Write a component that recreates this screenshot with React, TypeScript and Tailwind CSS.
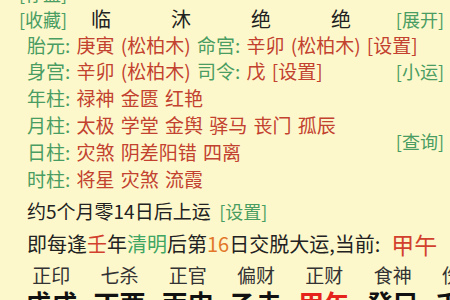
import React from "react";

const G = "text-[#4a9d62]";
const R = "text-[#c2412f]";

function Row({ h, children, className = "" }: { h: string; children: React.ReactNode; className?: string }) {
  return <div className={`flex items-center whitespace-nowrap ${h} ${className}`}>{children}</div>;
}

export default function App() {
  const labels = ["正印", "七杀", "正官", "偏财", "正财", "食神", "伤官"];
  const pillars = ["戊戌", "丁酉", "丙申", "乙未", "甲午", "癸巳", "壬辰"];
  return (
    <div
      className="w-[450px] h-[300px] overflow-hidden bg-[#fdf8cb] text-[19px] text-[#222]"
      style={{ fontFamily: '"Noto Sans CJK SC", "Noto Sans", sans-serif' }}
    >
      <div className="mt-[-20px]">
        <Row h="h-[26px]" className="pl-[19px]">
          <span className={`${G} text-[18px]`}>[存盘]</span>
        </Row>
        <Row h="h-[26px]" className="pl-[19px] pr-[6px]">
          <span className={`${G} text-[18px] w-[42px]`}>[收藏]</span>
          {["临", "沐", "绝", "绝"].map((c, i) => (
            <span key={i} className="w-[80px] text-center text-[20px]">
              {c}
            </span>
          ))}
          <span className={`${G} text-[18px] ml-auto`}>[展开]</span>
        </Row>
        <Row h="h-[26px]" className="pl-[27px] [word-spacing:2px]">
          <span className={G}>胎元: </span>
          <span className={R}>&nbsp;庚寅 (松柏木)&nbsp;</span>
          <span className={G}>命宫: </span>
          <span className={R}>&nbsp;辛卯 (松柏木) [设置]</span>
        </Row>
        <Row h="h-[26px]" className="pl-[27px] pr-[6px] [word-spacing:2px]">
          <span className={G}>身宫: </span>
          <span className={R}>&nbsp;辛卯 (松柏木)&nbsp;</span>
          <span className={G}>司令: </span>
          <span className={R}>&nbsp;戊 [设置]</span>
          <span className={`${G} text-[18px] ml-auto [word-spacing:0px]`}>[小运]</span>
        </Row>
        <div className="flex pr-[6px]">
          <div className="flex-1 pl-[27px] [word-spacing:2px]">
            <Row h="h-[27px]" className="mt-[1px]">
              <span className={G}>年柱: </span>
              <span className={R}>&nbsp;禄神 金匮 红艳</span>
            </Row>
            <Row h="h-[27px]">
              <span className={G}>月柱: </span>
              <span className={R}>&nbsp;太极 学堂 金舆 驿马 丧门 孤辰</span>
            </Row>
            <Row h="h-[27px]">
              <span className={G}>日柱: </span>
              <span className={R}>&nbsp;灾煞 阴差阳错 四离</span>
            </Row>
            <Row h="h-[27px]">
              <span className={G}>时柱: </span>
              <span className={R}>&nbsp;将星 灾煞 流霞</span>
            </Row>
          </div>
          <div className="flex flex-col">
            <span className={`${G} text-[18px] h-[26px] leading-[26px] mt-[44px]`}>[查询]</span>
          </div>
        </div>
        <Row h="h-[26px]" className="pl-[27px] mt-[5px]">
          <span>约5个月零14日后上运&nbsp;&nbsp;</span>
          <span className={`${G} text-[18px]`}>[设置]</span>
        </Row>
        <Row h="h-[28px]" className="pl-[27px] mt-[6px] text-[20px]">
          <span>即每逢</span>
          <span className="text-[#d2412e]">壬</span>
          <span>年</span>
          <span className="text-[#3fa563]">清明</span>
          <span>后第</span>
          <span className="text-[#e2772a]">16</span>
          <span>日交脱大运,当前: </span>
          <span className="text-[#d2412e] text-[23px] ml-[11px]">甲午</span>
        </Row>
        <div className="flex pl-[17px] h-[24px] items-center mt-[5px] whitespace-nowrap">
          {labels.map((l, i) => (
            <span key={i} className="w-[68.3px] shrink-0 text-center text-[19px] text-[#333]">
              {l}
            </span>
          ))}
        </div>
        <div className="flex pl-[17px] h-[30px] items-center whitespace-nowrap">
          {pillars.map((p, i) => (
            <span
              key={i}
              className={`w-[68.3px] shrink-0 text-center text-[26px] font-bold ${i === 4 ? "text-[#e5231b]" : "text-[#111]"}`}
            >
              {p}
            </span>
          ))}
        </div>
      </div>
    </div>
  );
}
